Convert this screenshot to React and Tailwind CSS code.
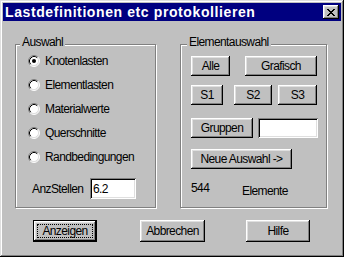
import React from 'react';

const raised = 'shadow-[inset_-1px_-1px_0_#000,inset_1px_1px_0_#fff,inset_-2px_-2px_0_#808080,inset_2px_2px_0_#dfdfdf]';
const sunken = 'shadow-[inset_1px_1px_0_#808080,inset_-1px_-1px_0_#fff,inset_2px_2px_0_#000,inset_-2px_-2px_0_#dfdfdf]';

const Btn = ({ children, className = '' }) => (
  <div className={`flex items-center justify-center bg-[#c0c0c0] ${raised} ${className}`}>{children}</div>
);

const Radio = ({ checked }) => (
  <svg width="12" height="12" viewBox="0 0 12 12" className="shrink-0">
    <circle cx="6" cy="6" r="5" fill="#fff" />
    <path d="M2.11 9.89 A5.5 5.5 0 0 1 9.89 2.11" fill="none" stroke="#808080" strokeWidth="1" />
    <path d="M9.89 2.11 A5.5 5.5 0 0 1 2.11 9.89" fill="none" stroke="#fff" strokeWidth="1" />
    <path d="M2.82 9.18 A4.5 4.5 0 0 1 9.18 2.82" fill="none" stroke="#000" strokeWidth="1" />
    <path d="M9.18 2.82 A4.5 4.5 0 0 1 2.82 9.18" fill="none" stroke="#dfdfdf" strokeWidth="1" />
    {checked && <circle cx="6" cy="6" r="2" fill="#000" />}
  </svg>
);

const Group = ({ label, labelLeft, className = '', children }) => (
  <div className={`relative border border-[#808080] shadow-[1px_1px_0_#fff,inset_1px_1px_0_#fff] ${className}`}>
    <span className={`absolute -top-[10px] ${labelLeft} bg-[#c0c0c0] px-[2px] leading-[14px]`}>{label}</span>
    {children}
  </div>
);

export default function App() {
  const options = ['Knotenlasten', 'Elementlasten', 'Materialwerte', 'Querschnitte', 'Randbedingungen'];
  return (
    <div
      className="w-[344px] h-[257px] bg-[#c0c0c0] text-black text-[12px] tracking-[-0.6px] leading-[14px] shadow-[inset_-1px_-1px_0_#000,inset_1px_1px_0_#dfdfdf,inset_-2px_-2px_0_#808080,inset_2px_2px_0_#fff] overflow-hidden"
      style={{ fontFamily: '"Liberation Sans", Arial, sans-serif' }}
    >
      {/* title bar */}
      <div className="mx-[3px] mt-[3px] h-[18px] bg-[#000080] flex items-center justify-between pl-[2px] pr-[2px]">
        <span className="text-white font-bold text-[14px] tracking-[0.6px] leading-[18px]">Lastdefinitionen etc protokollieren</span>
        <div className={`w-[16px] h-[14px] bg-[#c0c0c0] ${raised} flex items-center justify-center`}>
          <svg width="8" height="7" viewBox="0 0 8 7">
            <path d="M0 0h2v1h1v1h2V1h1V0h2v1H7v1H6v1H5v1h1v1h1v1h1v1H6V6H5V5H3v1H2v1H0V6h1V5h1V4h1V3H2V2H1V1H0z" fill="#000" />
          </svg>
        </div>
      </div>

      {/* groups */}
      <div className="flex mt-[23px] ml-[15px] gap-[24px]">
        <Group label="Auswahl" labelLeft="left-[4px]" className="w-[141px] h-[164px]">
          <div className="flex flex-col pt-[4px] pl-[12px]">
            {options.map((o, i) => (
              <div key={o} className="flex items-center h-[24px] gap-[5px]">
                <Radio checked={i === 0} />
                <span>{o}</span>
              </div>
            ))}
            <div className="flex items-center mt-[9px] pl-[4px]">
              <span className="w-[58px]">AnzStellen</span>
              <div className={`w-[46px] h-[21px] bg-white ${sunken} flex items-center pl-[3px]`}>6.2</div>
            </div>
          </div>
        </Group>

        <Group label="Elementauswahl" labelLeft="left-[6px]" className="w-[147px] h-[164px]">
          <div className="flex flex-col pt-[11px] pl-[10px]">
            <div className="flex gap-[15px]">
              <Btn className="w-[39px] h-[20px]">Alle</Btn>
              <Btn className="w-[72px] h-[20px]">Grafisch</Btn>
            </div>
            <div className="flex mt-[9px]">
              <Btn className="w-[32px] h-[20px]">S1</Btn>
              <Btn className="w-[38px] h-[20px] ml-[11px]">S2</Btn>
              <Btn className="w-[39px] h-[20px] ml-[6px]">S3</Btn>
            </div>
            <div className="flex mt-[13px] gap-[5px]">
              <Btn className="w-[62px] h-[20px]">Gruppen</Btn>
              <div className={`w-[60px] h-[20px] bg-white ${sunken}`} />
            </div>
            <div className="flex mt-[11px]">
              <Btn className="w-[101px] h-[20px]">Neue Auswahl -&gt;</Btn>
            </div>
            <div className="flex items-start mt-[12px]">
              <span className="w-[51px]">544</span>
              <span className="mt-[3px]">Elemente</span>
            </div>
          </div>
        </Group>
      </div>

      {/* bottom buttons */}
      <div className="flex mt-[12px] pl-[33px]">
        <div className="w-[64px] h-[22px] border border-black flex">
          <Btn className="flex-1 relative">
            <div className="absolute inset-[3px] border border-dotted border-black" />
            Anzeigen
          </Btn>
        </div>
        <Btn className="w-[65px] h-[22px] ml-[43px]">Abbrechen</Btn>
        <Btn className="w-[64px] h-[22px] ml-[41px]">Hilfe</Btn>
      </div>
    </div>
  );
}
